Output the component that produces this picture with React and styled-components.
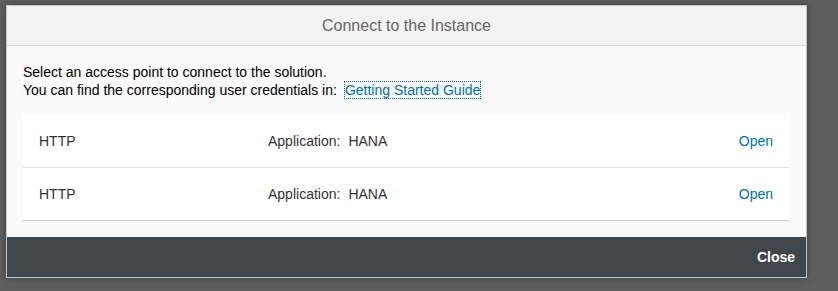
import React from "react";
import styled, { createGlobalStyle } from "styled-components";

const Global = createGlobalStyle`
  html, body { margin: 0; padding: 0; }
  body {
    background: #5f5f5f;
    font-family: "Liberation Sans", Arial, Helvetica, sans-serif;
    width: 838px;
    height: 291px;
    overflow: hidden;
  }
`;

const Page = styled.div`
  padding: 5px 0 0 6px;
`;

const Dialog = styled.div`
  width: 799px;
  border: 1px solid #c4c4c4;
  background: #fafafa;
  box-shadow: 0 0 8px rgba(0, 0, 0, 0.35);
  display: flex;
  flex-direction: column;
`;

const Header = styled.div`
  height: 39px;
  background: #f2f2f2;
  border-bottom: 1px solid #dcdcdc;
  display: flex;
  align-items: center;
  justify-content: center;
  font-size: 16px;
  color: #666666;
`;

const Content = styled.div`
  padding: 17px 16px 16px 16px;
  background: #fafafa;
`;

const Intro = styled.div`
  font-size: 14px;
  line-height: 18px;
  color: #000;
`;

const GuideLink = styled.a`
  color: #0070b1;
  text-decoration: none;
  margin-left: 8px;
  outline: 1px dotted #0a5b8f;
  outline-offset: 0;
`;

const List = styled.div`
  margin-top: 16px;
  background: #ffffff;
  border-bottom: 1px solid #cfcfcf;
`;

const Row = styled.div`
  height: 52px;
  display: grid;
  grid-template-columns: 229px 1fr auto;
  align-items: center;
  padding: 0 17px 0 16px;
  font-size: 14px;
  color: #333;
  border-top: ${(p) => (p.$first ? "none" : "1px solid #e3e3e3")};
`;

const Label = styled.span`
  margin-right: 8px;
`;

const OpenLink = styled.a`
  color: #0070b1;
  text-decoration: none;
  font-size: 14px;
`;

const Footer = styled.div`
  height: 40px;
  background: #3f464c;
  display: flex;
  align-items: center;
  justify-content: flex-end;
  padding: 0 11px;
`;

const CloseButton = styled.button`
  background: transparent;
  border: none;
  padding: 0;
  color: #ffffff;
  font-family: inherit;
  font-weight: bold;
  font-size: 14px;
  cursor: pointer;
`;

const rows = [
  { proto: "HTTP", app: "HANA" },
  { proto: "HTTP", app: "HANA" },
];

export default function App() {
  return (
    <>
      <Global />
      <Page>
        <Dialog>
          <Header>Connect to the Instance</Header>
          <Content>
            <Intro>
              Select an access point to connect to the solution.
              <br />
              You can find the corresponding user credentials in:
              <GuideLink href="#">Getting Started Guide</GuideLink>
            </Intro>
            <List>
              {rows.map((r, i) => (
                <Row key={i} $first={i === 0}>
                  <span>{r.proto}</span>
                  <span>
                    <Label>Application:</Label>
                    {r.app}
                  </span>
                  <OpenLink href="#">Open</OpenLink>
                </Row>
              ))}
            </List>
          </Content>
          <Footer>
            <CloseButton>Close</CloseButton>
          </Footer>
        </Dialog>
      </Page>
    </>
  );
}
